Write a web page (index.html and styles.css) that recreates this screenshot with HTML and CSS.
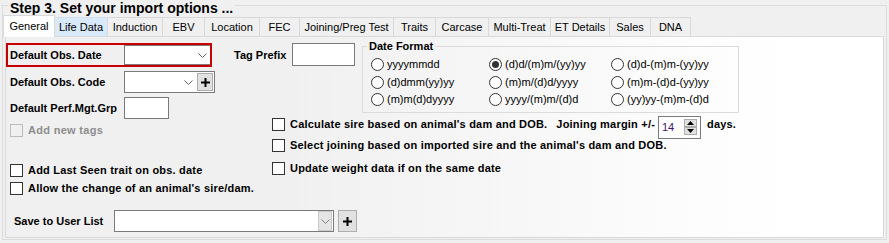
FILE: index.html
```html
<!DOCTYPE html>
<html>
<head>
<meta charset="utf-8">
<link rel="stylesheet" href="styles.css">
</head>
<body>
<div class="outer">
  <div class="outer-title">Step 3. Set your import options ...</div>
  <div class="tabs">
    <div class="tab sel">General</div>
    <div class="tab hover">Life Data</div>
    <div class="tab">Induction</div>
    <div class="tab">EBV</div>
    <div class="tab">Location</div>
    <div class="tab">FEC</div>
    <div class="tab">Joining/Preg Test</div>
    <div class="tab">Traits</div>
    <div class="tab">Carcase</div>
    <div class="tab">Multi-Treat</div>
    <div class="tab">ET Details</div>
    <div class="tab">Sales</div>
    <div class="tab">DNA</div>
  </div>
  <div class="tabctl">
    <div class="page">
      <div class="top">
        <div class="left">
          <div class="req">
            <span class="lbl">Default Obs. Date</span>
            <div class="combo c1">
              <svg class="chev" width="9" height="5" viewBox="0 0 9 5"><polyline points="0.5,0.5 4.5,4.5 8.5,0.5" fill="none" stroke="#606060" stroke-width="1"/></svg>
            </div>
          </div>
          <div class="row r2">
            <span class="lbl">Default Obs. Code</span>
            <div class="combo c2">
              <svg class="chev" width="9" height="5" viewBox="0 0 9 5"><polyline points="0.5,0.5 4.5,4.5 8.5,0.5" fill="none" stroke="#606060" stroke-width="1"/></svg>
              <div class="plus small"><svg width="9" height="9" viewBox="0 0 9 9"><path d="M0 4.5H9M4.5 0V9" stroke="#000" stroke-width="2"/></svg></div>
            </div>
          </div>
          <div class="row r3">
            <span class="lbl">Default Perf.Mgt.Grp</span>
            <div class="input i3"></div>
          </div>
          <div class="check dis r4"><span class="box"></span><span>Add new tags</span></div>
          <div class="check r5"><span class="box"></span><span>Add Last Seen trait on obs. date</span></div>
          <div class="check r6"><span class="box"></span><span>Allow the change of an animal's sire/dam.</span></div>
        </div>
        <div class="right">
          <div class="rtop">
            <div class="tagp">
              <span class="lbl tlbl">Tag Prefix</span>
              <div class="input tp"></div>
            </div>
            <fieldset class="group">
              <legend>Date Format</legend>
              <div class="radios">
                <div class="radio"><span class="circ"></span>yyyymmdd</div>
                <div class="radio"><span class="circ on"></span>(d)d/(m)m/(yy)yy</div>
                <div class="radio"><span class="circ"></span>(d)d-(m)m-(yy)yy</div>
                <div class="radio"><span class="circ"></span>(d)dmm(yy)yy</div>
                <div class="radio"><span class="circ"></span>(m)m/(d)d/yyyy</div>
                <div class="radio"><span class="circ"></span>(m)m-(d)d-(yy)yy</div>
                <div class="radio"><span class="circ"></span>(m)m(d)dyyyy</div>
                <div class="radio"><span class="circ"></span>yyyy/(m)m/(d)d</div>
                <div class="radio"><span class="circ"></span>(yy)yy-(m)m-(d)d</div>
              </div>
            </fieldset>
          </div>
          <div class="checks">
            <div class="check k1">
              <span class="box"></span><span>Calculate sire based on animal's dam and DOB.</span>
              <span class="jm">Joining margin +/-</span>
              <div class="spin">
                <span class="spin-val">14</span>
                <div class="spin-btns">
                  <div class="sb"><svg width="7" height="4" viewBox="0 0 7 4"><polygon points="0,4 7,4 3.5,0" fill="#000"/></svg></div>
                  <div class="sb"><svg width="7" height="4" viewBox="0 0 7 4"><polygon points="0,0 7,0 3.5,4" fill="#000"/></svg></div>
                </div>
              </div>
              <span class="days">days.</span>
            </div>
            <div class="check k2"><span class="box"></span><span>Select joining based on imported sire and the animal's dam and DOB.</span></div>
            <div class="check k3"><span class="box"></span><span>Update weight data if on the same date</span></div>
          </div>
        </div>
      </div>
      <div class="save">
        <span class="lbl slbl">Save to User List</span>
        <div class="combo c3">
          <div class="ddbtn"><svg width="9" height="5" viewBox="0 0 9 5"><polyline points="0.5,0.5 4.5,4.5 8.5,0.5" fill="none" stroke="#808080" stroke-width="1"/></svg></div>
        </div>
        <div class="plus big"><svg width="9" height="9" viewBox="0 0 9 9"><path d="M0 4.5H9M4.5 0V9" stroke="#000" stroke-width="2"/></svg></div>
      </div>
    </div>
  </div>
</div>
</body>
</html>
```

FILE: styles.css
```css
* { box-sizing: border-box; }
html, body { margin: 0; padding: 0; }
body {
  width: 889px;
  height: 243px;
  background: #f0f0f0;
  font-family: "Liberation Sans", Arial, sans-serif;
  font-size: 11px;
  color: #000;
  overflow: hidden;
}
.outer {
  margin: 5px 2px 0 2px;
  height: 235px;
  border: 1px solid #dcdcdc;
  padding: 0 2px 1px 2px;
  display: flex;
  flex-direction: column;
}
.outer-title {
  align-self: flex-start;
  margin: -6px 0 0 3px;
  padding: 0 2px;
  background: #f0f0f0;
  font-weight: bold;
  font-size: 14px;
  line-height: 16px;
}
.tabs {
  display: flex;
  align-items: flex-end;
  height: 22px;
  margin-top: -1px;
}
.tab {
  height: 19px;
  margin-bottom: 1px;
  border-top: 1px solid #d9d9d9;
  border-right: 1px solid #d9d9d9;
  background: #f0f0f0;
  text-align: center;
  padding-top: 3px;
  line-height: 12px;
  white-space: nowrap;
}
.tab.sel {
  position: relative;
  z-index: 2;
  height: 22px;
  margin-bottom: 0;
  margin-left: -2px;
  border-left: 1px solid #d9d9d9;
  background: #fff;
  padding-top: 4px;
}
.tab.hover { background: #d8eaf9; border-top-color: #d0e0f0; }
.tab:nth-child(1) { width: 52px; }
.tab:nth-child(2) { width: 53px; }
.tab:nth-child(3) { width: 55px; }
.tab:nth-child(4) { width: 42px; }
.tab:nth-child(5) { width: 55px; }
.tab:nth-child(6) { width: 40px; }
.tab:nth-child(7) { width: 94px; }
.tab:nth-child(8) { width: 42px; }
.tab:nth-child(9) { width: 53px; }
.tab:nth-child(10) { width: 62px; }
.tab:nth-child(11) { width: 59px; }
.tab:nth-child(12) { width: 41px; }
.tab:nth-child(13) { width: 40px; }

.tabctl {
  margin-top: -1px;
  height: 202px;
  border: 1px solid #d9d9d9;
  background: #fff;
  position: relative;
  z-index: 1;
}
.page {
  height: 100%;
  background: linear-gradient(to right, #f0f0f0 0%, #f0f0f0 32%, #fdfdfd 80%, #ffffff 92%);
  display: flex;
  flex-direction: column;
}
.top { display: flex; align-items: flex-start; }
.left { width: 228px; flex: none; }
.lbl { font-weight: bold; white-space: nowrap; }

.req {
  margin-top: 6px;
  width: 206px;
  height: 24px;
  border: 2px solid #c80000;
  display: flex;
  align-items: center;
  padding-left: 2px;
}
.req .lbl { width: 114px; flex: none; }
.combo {
  background: #fff;
  border: 1px solid #7a7a7a;
  display: flex;
  align-items: center;
  justify-content: flex-end;
}
.c1 { width: 86px; height: 20px; border-right: none; padding-right: 3px; }
.row { display: flex; align-items: center; }
.row .lbl { width: 118px; padding-left: 4px; flex: none; }
.r2 { margin-top: 4px; height: 22px; }
.c2 { width: 91px; height: 22px; padding-right: 1px; }
.c2 .chev { margin-right: 4px; }
.plus {
  background: #e1e1e1;
  border: 1px solid #adadad;
  display: flex;
  align-items: center;
  justify-content: center;
}
.plus.small { width: 16px; height: 18px; }
.plus.big { width: 19px; height: 22px; margin-left: 4px; }
.r3 { margin-top: 4px; height: 22px; }
.input { background: #fff; border: 1px solid #7a7a7a; }
.i3 { width: 45px; height: 22px; }

.check {
  display: flex;
  align-items: center;
  height: 13px;
  line-height: 13px;
  font-weight: bold;
  white-space: nowrap;
  letter-spacing: 0.2px;
}
.box {
  width: 13px;
  height: 13px;
  border: 1px solid #333;
  background: #fff;
  margin-right: 5px;
  flex: none;
}
.left .check { padding-left: 4px; }
.check.dis { color: #8d8d8d; letter-spacing: 0.3px; }
.check.dis .box { border-color: #bcbcbc; background: #f0f0f0; }
.r4 { margin-top: 5px; }
.r5 { margin-top: 27px; }
.r6 { margin-top: 5px; }

.right { flex: none; margin-top: 6px; }
.rtop { display: flex; align-items: flex-start; }
.tagp { display: flex; align-items: center; }
.tlbl { width: 58px; }
.tp { width: 63px; height: 23px; }
.group {
  margin: -3px 0 0 7px;
  width: 377px;
  border: 1px solid #dcdcdc;
  padding: 3px 0 3px 8px;
  min-width: 0;
}
.group legend {
  font-weight: bold;
  line-height: 13px;
  padding: 0 2px;
  margin-left: -4px;
}
.radios {
  display: grid;
  grid-template-columns: 118px 122px 1fr;
  grid-auto-rows: 17.5px;
}
.radio {
  display: flex;
  align-items: center;
  line-height: 13px;
  white-space: nowrap;
}
.circ {
  width: 13px;
  height: 13px;
  border: 1px solid #333;
  border-radius: 50%;
  background: #fff;
  margin-right: 3px;
  flex: none;
  display: flex;
  align-items: center;
  justify-content: center;
}
.circ.on::after {
  content: "";
  width: 7px;
  height: 7px;
  border-radius: 50%;
  background: #333;
}

.checks { margin-left: 38px; }
.k1 { margin-top: 5px; }
.k2 { margin-top: 8px; }
.k3 { margin-top: 10px; }
.jm { margin-left: 9px; }
.spin {
  margin: 6px 0 0 3px;
  width: 43px;
  height: 23px;
  background: #fff;
  border: 1px solid #7a7a7a;
  display: flex;
  align-items: center;
  justify-content: space-between;
  padding: 0 3px 0 3px;
  font-weight: normal;
  letter-spacing: 0;
}
.spin-val { color: #3c1470; }
.spin-btns { display: flex; flex-direction: column; }
.sb {
  width: 13px;
  height: 8px;
  background: #e1e1e1;
  border: 1px solid #adadad;
  display: flex;
  align-items: center;
  justify-content: center;
}
.days { margin-left: 6px; }

.save {
  margin-top: 15px;
  display: flex;
  align-items: center;
}
.slbl { width: 108px; padding-left: 8px; }
.c3 { width: 220px; height: 22px; padding-right: 1px; }
.ddbtn {
  width: 14px;
  height: 20px;
  background: #e5e5e5;
  border: 1px solid #c8c8c8;
  display: flex;
  align-items: center;
  justify-content: center;
}
```
